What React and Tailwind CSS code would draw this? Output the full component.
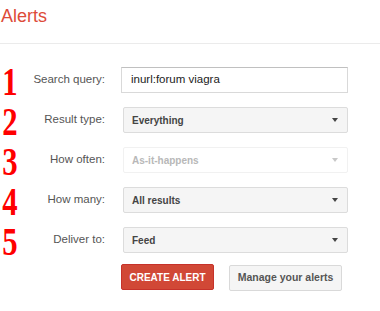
import React from 'react';

const rows = [
  { n: '1', label: 'Search query:', kind: 'input', value: 'inurl:forum viagra' },
  { n: '2', label: 'Result type:', kind: 'select', value: 'Everything' },
  { n: '3', label: 'How often:', kind: 'disabled', value: 'As-it-happens' },
  { n: '4', label: 'How many:', kind: 'select', value: 'All results' },
  { n: '5', label: 'Deliver to:', kind: 'select', value: 'Feed' },
];

const Arrow = ({ light }) => (
  <span
    className={`ml-auto h-0 w-0 border-x-[3px] border-t-[4px] border-x-transparent ${
      light ? 'border-t-[#c8c8c8]' : 'border-t-[#444]'
    }`}
  />
);

const Control = ({ kind, value }) => {
  if (kind === 'input') {
    return (
      <div className="ml-[16px] flex h-[26px] w-[227px] items-center border border-[#d9d9d9] border-t-[#c0c0c0] bg-white px-[9px] text-[11.5px] text-[#222]">
        {value}
      </div>
    );
  }
  if (kind === 'disabled') {
    return (
      <div className="ml-[18px] flex h-[26px] w-[225px] items-center rounded-[2px] border border-[#f1f1f1] bg-white pl-[8px] pr-[9px] text-[10px] font-bold text-[#b8b8b8]">
        {value}
        <Arrow light />
      </div>
    );
  }
  return (
    <div className="ml-[18px] flex h-[26px] w-[225px] items-center rounded-[2px] border border-[#dcdcdc] bg-[#f5f5f5] pl-[8px] pr-[9px] text-[10px] font-bold text-[#444]">
      {value}
      <Arrow />
    </div>
  );
};

export default function App() {
  return (
    <div className="h-[311px] w-[380px] bg-white font-['Liberation_Sans',Arial,sans-serif]">
      <div className="box-border h-[44px] border-b border-[#ebebeb] pl-[1px] pt-[4px]">
        <h1 className="text-[18px] leading-[24px] text-[#dd4b39]">Alerts</h1>
      </div>

      <div className="mt-[23px] flex flex-col gap-[14px]">
        {rows.map((r) => (
          <div key={r.n} className="flex h-[26px] items-center">
            <span className="mt-[2px] h-[26px] w-[24px] origin-left scale-x-75 pl-[3px] font-['Liberation_Serif',serif] text-[41px] font-bold leading-[26px] text-[#ff0000]">
              {r.n}
            </span>
            <span className="w-[81px] text-right text-[11.5px] text-[#555]">{r.label}</span>
            <Control kind={r.kind} value={r.value} />
          </div>
        ))}
      </div>

      <div className="ml-[121px] mt-[11px] flex items-start gap-[15px]">
        <button className="h-[26px] w-[93px] rounded-[2px] border border-[#c6322a] bg-[#d14836] text-[10px] font-bold uppercase text-white">
          Create Alert
        </button>
        <button className="mt-[1px] h-[26px] w-[113px] rounded-[2px] border border-[#d9d9d9] bg-[#f5f5f5] text-[10.5px] font-bold text-[#555]">
          Manage your alerts
        </button>
      </div>
    </div>
  );
}
